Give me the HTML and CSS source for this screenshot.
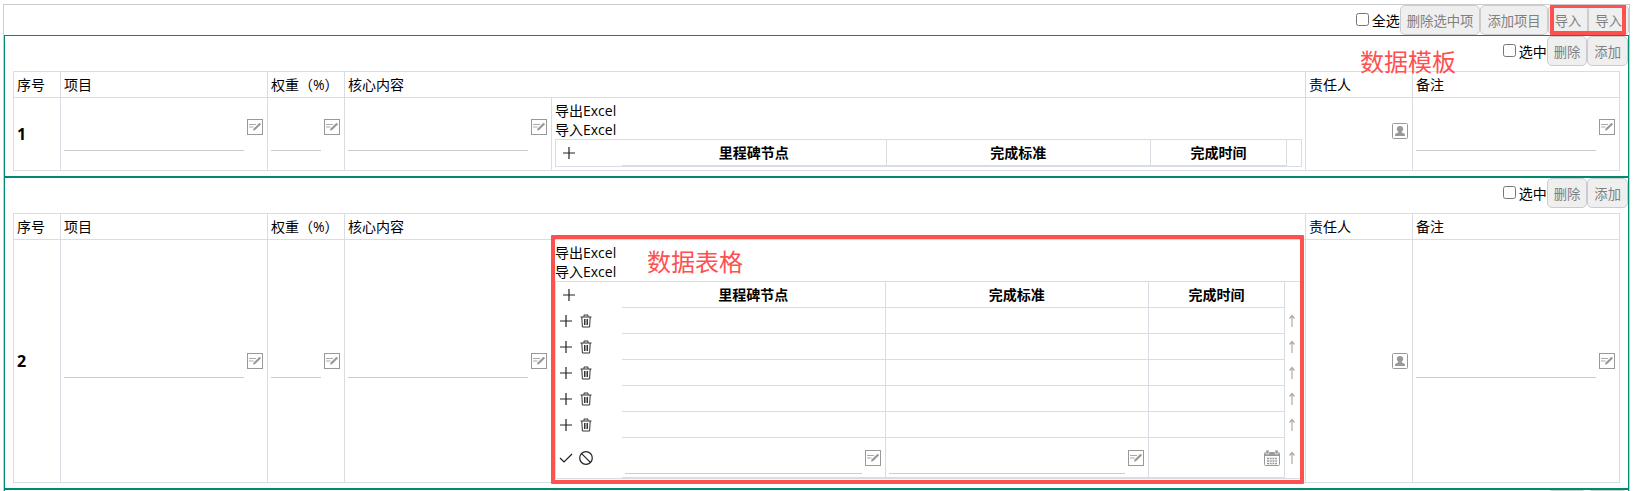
FILE: index.html
```html
<!DOCTYPE html>
<html lang="zh-CN">
<head>
  <meta charset="UTF-8" />
  <meta name="viewport" content="width=device-width, initial-scale=1.0" />
  <title>项目考核表</title>
  <link rel="stylesheet" href="styles.css">
</head>
<body>
  <svg class="sprite" aria-hidden="true">
    <symbol id="i-edit" viewBox="0 0 16 16">
      <rect x="0.5" y="0.5" width="15" height="15" fill="#fff" stroke="#999" />
      <path d="M2 5.500h7M2 8h4.500" fill="none" stroke="#aaa" stroke-width="1.200" />
      <path d="M6 11.800l.6-2.200 5.900-5.900 1.600 1.500-5.900 5.900z" fill="#999" />
    </symbol>
    <symbol id="i-user" viewBox="0 0 16 16">
      <rect x="0.5" y="0.5" width="15" height="15" rx="1" fill="#fff" stroke="#999" />
      <path d="M8 3c2 0 3.200 1.300 3.200 3 0 1.200-.6 2-1.400 2.600v.9c1.700.5 3.200 1 3.200 2.500v1H3v-1c0-1.500 1.500-2 3.200-2.500v-.9C5.400 8 4.800 7.200 4.800 6 4.800 4.300 6 3 8 3z" fill="#999" />
    </symbol>
    <symbol id="i-date" viewBox="0 0 16 16">
      <rect x="0.5" y="2.500" width="15" height="13" rx="1" fill="#fff" stroke="#999" />
      <path d="M1 2h14v4H1z" fill="#999" />
      <path d="M2 0h3v4H2zM11 0h3v4h-3z" fill="#999" stroke="#fff" stroke-width=".6" />
      <path d="M3 8.500h10M3 11h10M3 13.500h10" stroke="#999" stroke-width="1.300" stroke-dasharray="2 .7" />
    </symbol>
    <symbol id="i-plus" viewBox="0 0 14 14">
      <path d="M7 1v12M1 7h12" fill="none" stroke="#222" stroke-width="1.200" />
    </symbol>
    <symbol id="i-trash" viewBox="0 0 14 14">
      <path d="M1.500 3h11M5 2.800V1h4v1.800M2.800 3l.6 10h7.200l.6-10M5.500 5v6M7 5v6M8.500 5v6" fill="none" stroke="#333" />
    </symbol>
    <symbol id="i-check" viewBox="0 0 14 14">
      <path d="M1 7l4 4 8-8" fill="none" stroke="#222" stroke-width="1.200" />
    </symbol>
    <symbol id="i-ban" viewBox="0 0 14 14">
      <circle cx="7" cy="7" r="6.300" fill="none" stroke="#222" stroke-width="1.200" />
      <path d="M2.600 2.600l8.800 8.800" stroke="#222" stroke-width="1.200" />
    </symbol>
    <symbol id="i-up" viewBox="0 0 8 14">
      <path d="M4 1.500V13M1.500 4.500L4 1.500l2.500 3" fill="none" stroke="#b5a99f" stroke-width="1.200" />
    </symbol>
  </svg>

  <div class="board">
    <div class="bar">
      <label class="pick"><input type="checkbox">全选</label>
      <button class="btn">删除选中项</button>
      <button class="btn">添加项目</button>
      <span class="marked-btns">
        <button class="btn">导入</button><button class="btn">导入</button>
      </span>
    </div>

    <section class="panel">
      <div class="bar">
        <label class="pick"><input type="checkbox">选中</label>
        <button class="btn">删除</button>
        <button class="btn">添加</button>
      </div>
      <div class="note note-template">数据模板</div>
      <table class="items">
        <colgroup>
          <col class="c-no"><col class="c-text"><col class="c-weight"><col class="c-text"><col><col class="c-owner"><col class="c-text">
        </colgroup>
        <thead>
          <tr>
            <th>序号</th>
            <th>项目</th>
            <th>权重（%）</th>
            <th colspan="2">核心内容</th>
            <th>责任人</th>
            <th>备注</th>
          </tr>
        </thead>
        <tbody>
          <tr class="row-short">
            <td class="no">1</td>
            <td><div class="field"><input type="text" aria-label="项目"><svg class="icon"><use href="#i-edit" /></svg></div></td>
            <td><div class="field"><input type="text" aria-label="权重"><svg class="icon"><use href="#i-edit" /></svg></div></td>
            <td><div class="field"><input type="text" aria-label="核心内容"><svg class="icon"><use href="#i-edit" /></svg></div></td>
            <td>
              <a class="excel" href="#">导出Excel</a>
              <a class="excel" href="#">导入Excel</a>
              <div class="grid-box">
                <table class="grid">
                  <colgroup><col class="g-act"><col><col><col class="g-date"><col class="g-move"></colgroup>
                  <thead>
                    <tr>
                      <th><button class="tool" aria-label="新增"><svg><use href="#i-plus" /></svg></button></th>
                      <th>里程碑节点</th>
                      <th>完成标准</th>
                      <th>完成时间</th>
                      <th></th>
                    </tr>
                  </thead>
                </table>
              </div>
            </td>
            <td><div class="field person"><svg class="icon"><use href="#i-user" /></svg></div></td>
            <td><div class="field"><input type="text" aria-label="备注"><svg class="icon"><use href="#i-edit" /></svg></div></td>
          </tr>
        </tbody>
      </table>
    </section>

    <section class="panel">
      <div class="bar">
        <label class="pick"><input type="checkbox">选中</label>
        <button class="btn">删除</button>
        <button class="btn">添加</button>
      </div>
      <table class="items">
        <colgroup>
          <col class="c-no"><col class="c-text"><col class="c-weight"><col class="c-text"><col><col class="c-owner"><col class="c-text">
        </colgroup>
        <thead>
          <tr>
            <th>序号</th>
            <th>项目</th>
            <th>权重（%）</th>
            <th colspan="2">核心内容</th>
            <th>责任人</th>
            <th>备注</th>
          </tr>
        </thead>
        <tbody>
          <tr>
            <td class="no">2</td>
            <td><div class="field"><input type="text" aria-label="项目"><svg class="icon"><use href="#i-edit" /></svg></div></td>
            <td><div class="field"><input type="text" aria-label="权重"><svg class="icon"><use href="#i-edit" /></svg></div></td>
            <td><div class="field"><input type="text" aria-label="核心内容"><svg class="icon"><use href="#i-edit" /></svg></div></td>
            <td class="marked-cell">
              <div class="note note-table">数据表格</div>
              <a class="excel" href="#">导出Excel</a>
              <a class="excel" href="#">导入Excel</a>
              <div class="grid-box">
                <table class="grid">
                  <colgroup><col class="g-act"><col><col><col class="g-date"><col class="g-move-wide"></colgroup>
                  <thead>
                    <tr>
                      <th><button class="tool" aria-label="新增"><svg><use href="#i-plus" /></svg></button></th>
                      <th>里程碑节点</th>
                      <th>完成标准</th>
                      <th>完成时间</th>
                      <th></th>
                    </tr>
                  </thead>
                  <tbody>
                    <tr>
                      <td><div class="tools"><button class="tool" aria-label="新增"><svg><use href="#i-plus" /></svg></button><button class="tool" aria-label="删除"><svg><use href="#i-trash" /></svg></button></div></td>
                      <td></td><td></td><td></td>
                      <td><button class="move" aria-label="上移"><svg><use href="#i-up" /></svg></button></td>
                    </tr>
                    <tr>
                      <td><div class="tools"><button class="tool" aria-label="新增"><svg><use href="#i-plus" /></svg></button><button class="tool" aria-label="删除"><svg><use href="#i-trash" /></svg></button></div></td>
                      <td></td><td></td><td></td>
                      <td><button class="move" aria-label="上移"><svg><use href="#i-up" /></svg></button></td>
                    </tr>
                    <tr>
                      <td><div class="tools"><button class="tool" aria-label="新增"><svg><use href="#i-plus" /></svg></button><button class="tool" aria-label="删除"><svg><use href="#i-trash" /></svg></button></div></td>
                      <td></td><td></td><td></td>
                      <td><button class="move" aria-label="上移"><svg><use href="#i-up" /></svg></button></td>
                    </tr>
                    <tr>
                      <td><div class="tools"><button class="tool" aria-label="新增"><svg><use href="#i-plus" /></svg></button><button class="tool" aria-label="删除"><svg><use href="#i-trash" /></svg></button></div></td>
                      <td></td><td></td><td></td>
                      <td><button class="move" aria-label="上移"><svg><use href="#i-up" /></svg></button></td>
                    </tr>
                    <tr>
                      <td><div class="tools"><button class="tool" aria-label="新增"><svg><use href="#i-plus" /></svg></button><button class="tool" aria-label="删除"><svg><use href="#i-trash" /></svg></button></div></td>
                      <td></td><td></td><td></td>
                      <td><button class="move" aria-label="上移"><svg><use href="#i-up" /></svg></button></td>
                    </tr>
                    <tr class="editing">
                      <td><div class="tools"><button class="tool" aria-label="保存"><svg><use href="#i-check" /></svg></button><button class="tool" aria-label="取消"><svg><use href="#i-ban" /></svg></button></div></td>
                      <td><div class="field"><input type="text" aria-label="里程碑节点"><svg class="icon"><use href="#i-edit" /></svg></div></td>
                      <td><div class="field"><input type="text" aria-label="完成标准"><svg class="icon"><use href="#i-edit" /></svg></div></td>
                      <td><div class="field person"><svg class="icon"><use href="#i-date" /></svg></div></td>
                      <td><button class="move" aria-label="上移"><svg><use href="#i-up" /></svg></button></td>
                    </tr>
                  </tbody>
                </table>
              </div>
            </td>
            <td><div class="field person"><svg class="icon"><use href="#i-user" /></svg></div></td>
            <td><div class="field"><input type="text" aria-label="备注"><svg class="icon"><use href="#i-edit" /></svg></div></td>
          </tr>
        </tbody>
      </table>
    </section>

    <section class="panel">
      <div class="bar">
        <label class="pick"><input type="checkbox">选中</label>
        <button class="btn">删除</button>
        <button class="btn">添加</button>
      </div>
    </section>
  </div>
</body>
</html>
```
FILE: styles.css
```css
* { box-sizing: border-box; }
body {
  font-family: "Open Sans", "Noto Sans CJK SC", sans-serif;
  font-size: 14px;
  line-height: 19px;
  color: #000;
  background: #fff;
  margin: 0;
  padding: 4px 4px 0 3px;
}
.sprite { position: absolute; width: 0; height: 0; }

/* the board is cut off at the bottom of the window */
.board {
  height: calc(100vh - 4px);
  overflow: hidden;
  border: 1px solid #ccc;
  border-bottom: none;
}
.bar {
  display: flex;
  justify-content: flex-end;
  height: 30px;
}
.pick {
  display: flex;
  align-items: center;
  gap: 3px;
}
.pick input {
  width: 13px;
  height: 13px;
  margin: 0 0 2px;
}
.btn {
  font-family: inherit;
  height: 30px;
  padding: 0 6px;
  color: #808080;
  background: #efefef;
  border: 1px solid #ccc;
  border-radius: 5px;
}
.marked-btns {
  position: relative;
  display: flex;
}
.marked-btns::after {
  content: "";
  position: absolute;
  inset: -1px 3px 0 2px;
  border: 4px solid #ff5050;
  border-radius: 1px;
  pointer-events: none;
}

.panel {
  position: relative;
  border: 1px solid #008a70;
  padding-bottom: 5px;
}

.items {
  width: calc(100% - 16px);
  margin: 5px 8px 0;
  table-layout: fixed;
  border-collapse: collapse;
}
.items > thead > tr > th,
.items > tbody > tr > td {
  border: 1px solid #dadce4;
  padding: 3px;
}
.items > thead > tr > th {
  font-weight: normal;
  text-align: left;
}
.items .no {
  font-size: 16px;
  font-weight: bold;
}
.c-no { width: 47px; }
.c-text { width: 207px; }
.c-weight { width: 77px; }
.c-owner { width: 107px; }

.field {
  display: flex;
  align-items: center;
  gap: 3px;
  padding-right: 1px;
}
.field input {
  flex: 1;
  min-width: 0;
  height: 33px;
  padding: 0;
  border: none;
  border-bottom: 1px solid #ccc;
  outline: none;
  background: none;
}
.row-short .field input { height: 47px; }
.row-short .field { padding-bottom: 14px; }
.row-short .person { padding-bottom: 6px; }
.person { justify-content: flex-end; }
.icon {
  flex: none;
  width: 16px;
  height: 16px;
}

.excel {
  display: block;
  color: #000;
  text-decoration: none;
}
.grid-box { border: 1px solid #dadce4; }
.grid {
  width: 100%;
  table-layout: fixed;
  border-collapse: separate;
  border-spacing: 0;
}
.grid th,
.grid td {
  height: 26px;
  padding: 0 3px;
  border: solid #dadce4;
  border-width: 0 1px 1px 0;
}
.grid th:first-child,
.grid td:first-child,
.grid th:last-child,
.grid td:last-child {
  border: none;
}
.grid .editing td { height: 40px; }
.g-act { width: 66px; }
.g-date { width: 136px; }
.g-move { width: 14px; }
.g-move-wide { width: 16px; }

.tools {
  display: flex;
  gap: 6px;
}
.tool,
.move {
  display: block;
  padding: 0;
  border: none;
  background: none;
}
.tool svg,
.move svg {
  display: block;
  width: 14px;
  height: 14px;
}
.grid th .tool { margin-left: 3px; }
.move svg { width: 8px; }

/* red annotations */
.marked-cell { position: relative; }
.marked-cell::after {
  content: "";
  position: absolute;
  inset: -5px 1px -2px -1px;
  border: 4px solid #ff5050;
  border-radius: 1px;
  pointer-events: none;
}
.note {
  position: absolute;
  font-size: 24px;
  line-height: 24px;
  color: #ff5050;
}
.note-template { top: 14px; right: 172px; }
.note-table { top: 10px; left: 95px; }
```
